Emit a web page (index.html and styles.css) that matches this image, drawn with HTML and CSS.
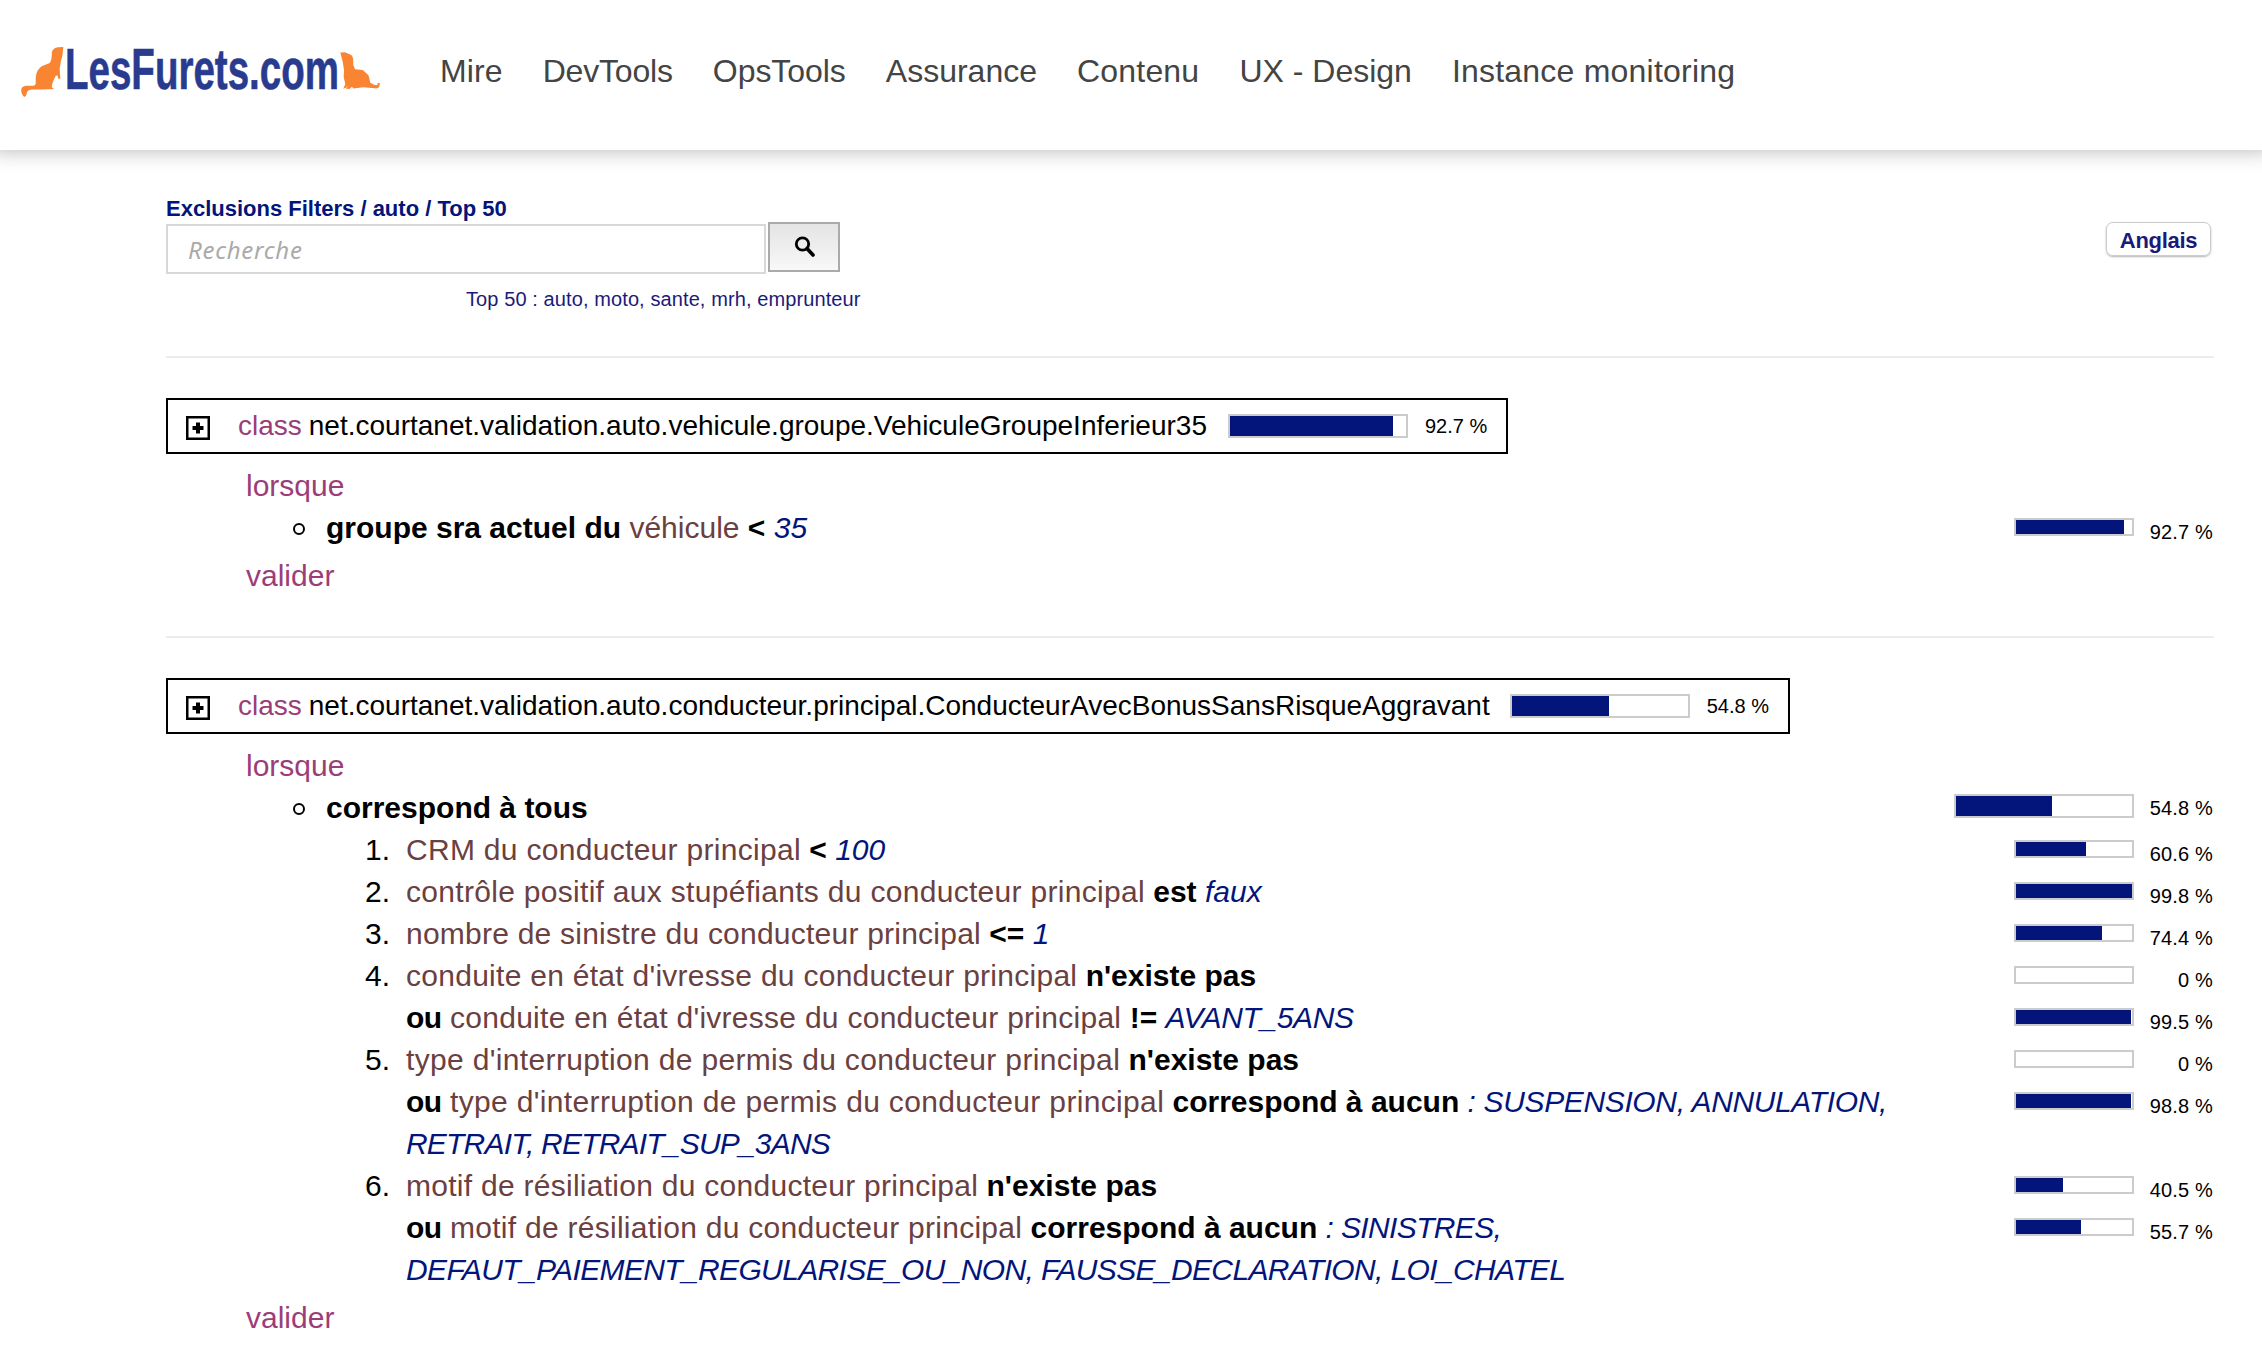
FILE: index.html
```html
<!DOCTYPE html>
<html lang="fr">
<head>
<meta charset="utf-8">
<title>Exclusions Filters</title>
<link rel="stylesheet" href="styles.css">
</head>
<body>
<header class="topbar">
  <a class="logo">
    <svg class="ferret-left" width="44" height="52" viewBox="0 0 44 52"><path fill="#f98432" d="M42.300 1L37 1.300Q32 2 30.900 6Q31 14 28.700 17L20.700 20.300Q15 24 14.700 32.300V38Q14 39.700 12.300 39.700H5Q.5 40 .2 44Q0 48 3.300 51Q5 50.500 5.700 47.700Q5.500 44.500 10.700 43.600L22 43.400L32.700 43L30.700 41Q31 38 32.700 34L34.700 29.700L36.500 29.500L37.300 32.700H39.300L39 28.300L38.700 22.300L40 15L41.500 9Z"/></svg>
    <span class="logo-text">LesFurets.com</span>
    <svg class="ferret-right" width="41" height="38" viewBox="0 0 41 38"><path fill="#f98432" d="M.3.5L5 .3L10.700 2.700Q13 4 13.200 8L13.300 13L15 17.300L22.700 18L28.300 23Q29.500 26 30.300 30.700L34 32.700L37.300 33.300L37.700 31L40 31.300L39 35.300Q37 36.800 35 36.300L23.300 35.300L13.300 36.500L12 34.700L9.300 37L6 36.700L8.300 33L6 35.700L3.300 36.700L5.300 32L3.700 25.300L4 18L2.700 9.700Z"/></svg>
  </a>
  <nav class="nav"><a>Mire</a><a class="nav-dev">DevTools</a><a class="nav-ops">OpsTools</a><a class="nav-assurance">Assurance</a><a class="nav-contenu">Contenu</a><a class="nav-ux">UX - Design</a><a class="nav-monitoring">Instance monitoring</a></nav>
</header>
<main class="page">
  <section class="tools">
    <div class="search-area">
      <div class="crumbs">Exclusions Filters / auto / Top 50</div>
      <form class="search">
        <div class="field">Recherche</div>
        <div class="go"><svg width="22" height="22" viewBox="0 0 22 22"><circle cx="8.500" cy="8" r="6.200" fill="none" stroke="#000" stroke-width="2.800"/><path d="M13 12.500L19 19" stroke="#000" stroke-width="3.600" stroke-linecap="round"/></svg></div>
      </form>
      <div class="top50">Top 50 : auto, moto, sante, mrh, emprunteur</div>
    </div>
    <a class="lang">Anglais</a>
  </section>

  <section class="rule">
    <h2 class="rule-head"><svg class="plus" width="24" height="24" viewBox="0 0 24 24"><path d="M1.250 1.250H22.750V22.750H1.250Z" fill="#fff" stroke="#000" stroke-width="2.500"/><path d="M12 6.500V17.500M6.500 12H17.500" stroke="#000" stroke-width="4"/></svg><span class="kw">class</span><span class="cls cls-short">net.courtanet.validation.auto.vehicule.groupe.VehiculeGroupeInferieur35</span><span class="bar big"><i style="width:163px"></i></span><span class="pct">92.7 %</span></h2>
    <div class="body">
      <div class="kw">lorsque</div>
      <div class="row l1"><span class="mark"><b class="dot"></b></span><p><b>groupe sra actuel du</b> <span class="f f-short">véhicule</span> <b>&lt;</b> <em>35</em></p><span class="stat"><span class="bar"><i style="width:108px"></i></span><span class="pct">92.7 %</span></span></div>
      <div class="kw end">valider</div>
    </div>
  </section>

  <section class="rule">
    <h2 class="rule-head"><svg class="plus" width="24" height="24" viewBox="0 0 24 24"><path d="M1.250 1.250H22.750V22.750H1.250Z" fill="#fff" stroke="#000" stroke-width="2.500"/><path d="M12 6.500V17.500M6.500 12H17.500" stroke="#000" stroke-width="4"/></svg><span class="kw">class</span><span class="cls">net.courtanet.validation.auto.conducteur.principal.ConducteurAvecBonusSansRisqueAggravant</span><span class="bar big"><i style="width:97px"></i></span><span class="pct">54.8 %</span></h2>
    <div class="body">
      <div class="kw">lorsque</div>
      <div class="row l1"><span class="mark"><b class="dot"></b></span><p><b>correspond à tous</b></p><span class="stat wide"><span class="bar big"><i style="width:96px"></i></span><span class="pct">54.8 %</span></span></div>
      <div class="row l2"><span class="mark">1.</span><p><span class="f f-long">CRM du conducteur principal</span> <b>&lt;</b> <em>100</em></p><span class="stat"><span class="bar"><i style="width:70px"></i></span><span class="pct">60.6 %</span></span></div>
      <div class="row l2"><span class="mark">2.</span><p><span class="f f-long">contrôle positif aux stupéfiants du conducteur principal</span> <b>est</b> <em>faux</em></p><span class="stat"><span class="bar"><i style="width:116px"></i></span><span class="pct">99.8 %</span></span></div>
      <div class="row l2"><span class="mark">3.</span><p><span class="f f-mid">nombre de sinistre du conducteur principal</span> <b>&lt;=</b> <em>1</em></p><span class="stat"><span class="bar"><i style="width:86px"></i></span><span class="pct">74.4 %</span></span></div>
      <div class="row l2"><span class="mark">4.</span><p><span class="f">conduite en état d'ivresse du conducteur principal</span> <b>n'existe pas</b></p><span class="stat"><span class="bar"></span><span class="pct">0 %</span></span></div>
      <div class="row l2"><span class="mark"></span><p><b class="or">ou</b> <span class="f">conduite en état d'ivresse du conducteur principal</span> <b>!=</b> <em class="caps">AVANT_5ANS</em></p><span class="stat"><span class="bar"><i style="width:115px"></i></span><span class="pct">99.5 %</span></span></div>
      <div class="row l2"><span class="mark">5.</span><p><span class="f f-type">type d'interruption de permis du conducteur principal</span> <b>n'existe pas</b></p><span class="stat"><span class="bar"></span><span class="pct">0 %</span></span></div>
      <div class="row l2"><span class="mark"></span><p><b class="or">ou</b> <span class="f f-type">type d'interruption de permis du conducteur principal</span> <b>correspond à aucun</b> <em class="caps">: SUSPENSION, ANNULATION,<br><span class="tight">RETRAIT, RETRAIT_SUP_3ANS</span></em></p><span class="stat"><span class="bar"><i style="width:115px"></i></span><span class="pct">98.8 %</span></span></div>
      <div class="row l2"><span class="mark">6.</span><p><span class="f">motif de résiliation du conducteur principal</span> <b>n'existe pas</b></p><span class="stat"><span class="bar"><i style="width:47px"></i></span><span class="pct">40.5 %</span></span></div>
      <div class="row l2"><span class="mark"></span><p><b class="or">ou</b> <span class="f">motif de résiliation du conducteur principal</span> <b>correspond à aucun</b> <em class="snug">: SINISTRES,<br>DEFAUT_PAIEMENT_REGULARISE_OU_NON, FAUSSE_DECLARATION, LOI_CHATEL</em></p><span class="stat"><span class="bar"><i style="width:65px"></i></span><span class="pct">55.7 %</span></span></div>
      <div class="kw end">valider</div>
    </div>
  </section>
</main>
</body>
</html>
```
FILE: styles.css
```css
* { box-sizing: border-box; }
body { margin: 0; background: #fff; color: #000; font: 30px/42px "Liberation Sans", Arial, sans-serif; height: 1368px; overflow: hidden; }
p { margin: 0; white-space: nowrap; flex: 1; }
.topbar { height: 150px; display: flex; align-items: flex-start; padding-left: 21px; box-shadow: 0 -10px 20px 10px rgba(0,0,0,.3); }
.logo { display: flex; width: 359px; padding-top: 46px; }
.ferret-left, .ferret-right { flex: none; }
.ferret-right { margin-top: 6px; }
.logo-text { flex: none; width: 275px; white-space: nowrap; font: bold 58px/46px "Liberation Sans", sans-serif; color: #283b8f; -webkit-text-stroke: .6px #283b8f; transform: scaleX(.664); transform-origin: 0 0; }
.nav { display: flex; gap: 40px; margin-left: 60px; padding-top: 50px; font-size: 32px; color: #444; letter-spacing: .1px; }
.nav-dev { letter-spacing: -.18px; }
.nav-ops { letter-spacing: -.05px; }
.nav-assurance { letter-spacing: 0; }
.nav-contenu { letter-spacing: .2px; }
.nav-ux { letter-spacing: 0; }
.nav-monitoring { letter-spacing: .22px; }
.page { padding: 44px 48px 0 166px; }
.tools { display: flex; justify-content: space-between; height: 162px; }
.crumbs { height: 28px; font: bold 22px/30px "Liberation Sans", sans-serif; color: #03157a; }
.search { display: flex; gap: 2px; }
.field { width: 600px; height: 50px; margin-top: 2px; border: 2px solid #d8d8d8; padding-left: 20px; font: italic 24px/47px "Noto Sans", "Open Sans", sans-serif; letter-spacing: .7px; color: #aaa; }
.go { width: 72px; height: 50px; border: 2px solid #aaa; background: linear-gradient(#e4e4e4, #f8f8f8); padding: 12px 0 0 24px; line-height: 0; }
.top50 { margin: 11px 0 0 300px; font-size: 20px; line-height: 28px; color: #1a1a7a; white-space: nowrap; letter-spacing: .1px; }
.lang { width: 105px; height: 34px; margin: 28px 3px 0 0; border: 1px solid #ccc; border-radius: 7px; box-shadow: 0 1px 2px rgba(0,0,0,.3); text-align: center; font: bold 22px/35px "Liberation Sans", sans-serif; letter-spacing: -.3px; color: #1a1a7a; }
.rule { border-top: 2px solid #ececec; padding-top: 40px; height: 280px; }
.rule-head { display: flex; width: fit-content; align-items: flex-start; height: 56px; margin: 0; border: 2px solid #000; padding: 0 19px 0 18px; font-size: 28px; font-weight: normal; line-height: 52px; }
.plus { margin: 16px 28px 0 0; }
.kw { color: #9b3d78; }
.cls { margin: 0 20px 0 7px; white-space: nowrap; }
.cls-short { margin-right: 21px; }
.bar { display: block; flex: none; width: 120px; height: 18px; border: 2px solid #ccc; background: #fff; }
.bar i { display: block; height: 100%; background: #03157a; }
.bar.big { width: 180px; height: 24px; }
.rule-head .bar { margin: 14px 17px 0 0; }
.pct { font-size: 20px; white-space: nowrap; }
.body { padding-top: 11px; }
.body .kw { padding-left: 80px; }
.body .kw.end { margin-top: 6px; }
.row { display: flex; align-items: flex-start; }
.mark { flex: none; width: 160px; text-align: right; padding-right: 16px; }
.l2 .mark { width: 240px; }
.dot { display: block; width: 12px; height: 12px; border: 2px solid #000; border-radius: 50%; margin: 16px 5px 0 auto; }
.f { color: #6b4040; letter-spacing: .27px; }
.f-short { letter-spacing: 0; }
.f-mid { letter-spacing: .23px; }
.f-long { letter-spacing: .3px; }
.f-type { letter-spacing: .34px; }
.or { letter-spacing: -.5px; }
em { color: #03157a; }
.caps { letter-spacing: -.36px; }
.tight { letter-spacing: -.8px; }
.snug { letter-spacing: -.64px; }
.stat { display: flex; height: 42px; padding-top: 11px; }
.stat .pct { width: 80px; height: 28px; text-align: right; padding-right: 1px; line-height: 28px; letter-spacing: .15px; }
.stat.wide { padding-top: 7px; }
```
